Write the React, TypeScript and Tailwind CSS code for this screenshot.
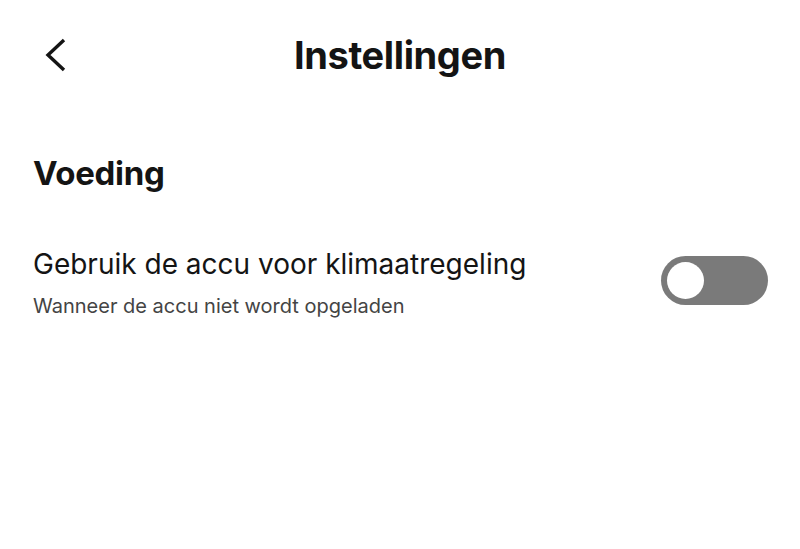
export default function App() {
  return (
    <div className="w-[800px] h-[549px] bg-white text-[#141414] font-['Inter',sans-serif] overflow-hidden">
      <header className="relative flex items-center justify-center h-[110px]">
        <button type="button" className="absolute left-[44px] top-[38px] text-[#141414]">
          <svg width="24" height="34" viewBox="0 0 24 34" fill="none">
            <path d="M20 2 L4 17 L20 32" stroke="currentColor" strokeWidth="3.4" strokeLinecap="butt" strokeLinejoin="miter" />
          </svg>
        </button>
        <h1 className="text-[38px] font-bold tracking-[-0.4px]">Instellingen</h1>
      </header>

      <section className="pl-[33px] pr-[32px] pt-[47px]">
        <h2 className="text-[33px] font-bold leading-none tracking-[-0.3px]">Voeding</h2>

        <div className="flex items-start justify-between mt-[57px]">
          <div className="flex flex-col">
            <span className="text-[28px] leading-[34px]">Gebruik de accu voor klimaatregeling</span>
            <span className="text-[20px] leading-[26px] mt-[12px] text-[#444]">
              Wanneer de accu niet wordt opgeladen
            </span>
          </div>
          <div className="mt-[9px] w-[107px] h-[49px] rounded-full bg-[#7a7a7a] flex items-center pl-[6px]">
            <div className="w-[37px] h-[37px] rounded-full bg-white" />
          </div>
        </div>
      </section>
    </div>
  );
}
